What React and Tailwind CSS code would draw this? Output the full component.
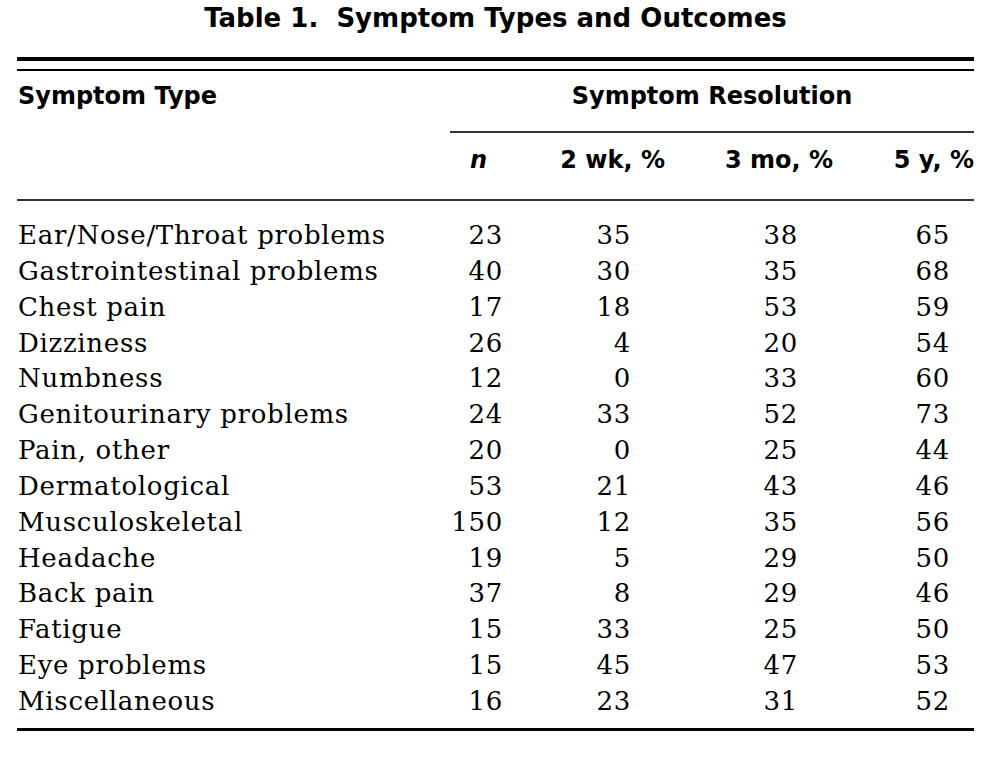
import React from 'react';

const rows = [
  ['Ear/Nose/Throat problems', '23', '35', '38', '65'],
  ['Gastrointestinal problems', '40', '30', '35', '68'],
  ['Chest pain', '17', '18', '53', '59'],
  ['Dizziness', '26', '4', '20', '54'],
  ['Numbness', '12', '0', '33', '60'],
  ['Genitourinary problems', '24', '33', '52', '73'],
  ['Pain, other', '20', '0', '25', '44'],
  ['Dermatological', '53', '21', '43', '46'],
  ['Musculoskeletal', '150', '12', '35', '56'],
  ['Headache', '19', '5', '29', '50'],
  ['Back pain', '37', '8', '29', '46'],
  ['Fatigue', '15', '33', '25', '50'],
  ['Eye problems', '15', '45', '47', '53'],
  ['Miscellaneous', '16', '23', '31', '52'],
];

const sans = "font-['DejaVu_Sans',sans-serif] font-bold";
const serif = "font-['DejaVu_Serif',serif]";
const cols = 'grid grid-cols-[433px_80px_150px_170px_124px]';

const App = () => {
  return (
    <div className="w-[991px] h-[759px] bg-white text-black overflow-hidden">
      {/* titulo */}
      <div className="h-[57px] pt-[3px]">
        <h1 className={`${sans} text-[26px] leading-[30px] text-center`}>
          Table 1.&nbsp; Symptom Types and Outcomes
        </h1>
      </div>

      <div className="mx-[17px]">
        <div className="h-[4px] bg-black" />
        <div className="h-[2px] mt-[8px] bg-black" />

        {/* cabecalho */}
        <div className={`${cols} ${sans} text-[24px] leading-[24px]`}>
          <div className="h-[60px] pt-[13px] pl-[1px]">Symptom Type</div>
          <div className="col-span-4 h-[60px] pt-[13px] text-center">Symptom Resolution</div>
        </div>
        <div className={cols}>
          <div />
          <div className="col-span-4 h-[2px] bg-[#333]" />
        </div>
        <div className={`${cols} ${sans} text-[24px] leading-[24px] h-[66px] pt-[15px]`}>
          <div />
          <div className="text-right pr-[43px] italic">n</div>
          <div className="text-right pr-[15px]">2 wk, %</div>
          <div className="text-right pr-[17px]">3 mo, %</div>
          <div className="text-right">5 y, %</div>
        </div>
        <div className="h-[2px] bg-[#333]" />

        {/* linhas */}
        <div className={`${serif} text-[26px] tracking-[0.7px] leading-[35.85px] pt-[17px] pb-[8px]`}>
          {rows.map(r => (
            <div key={r[0]} className={cols}>
              <div className="pl-[1px]">{r[0]}</div>
              <div className="text-right pr-[27px]">{r[1]}</div>
              <div className="text-right pr-[49px]">{r[2]}</div>
              <div className="text-right pr-[52px]">{r[3]}</div>
              <div className="text-right pr-[24px]">{r[4]}</div>
            </div>
          ))}
        </div>
        <div className="h-[3px] bg-black" />
      </div>
    </div>
  );
};

export default App;
